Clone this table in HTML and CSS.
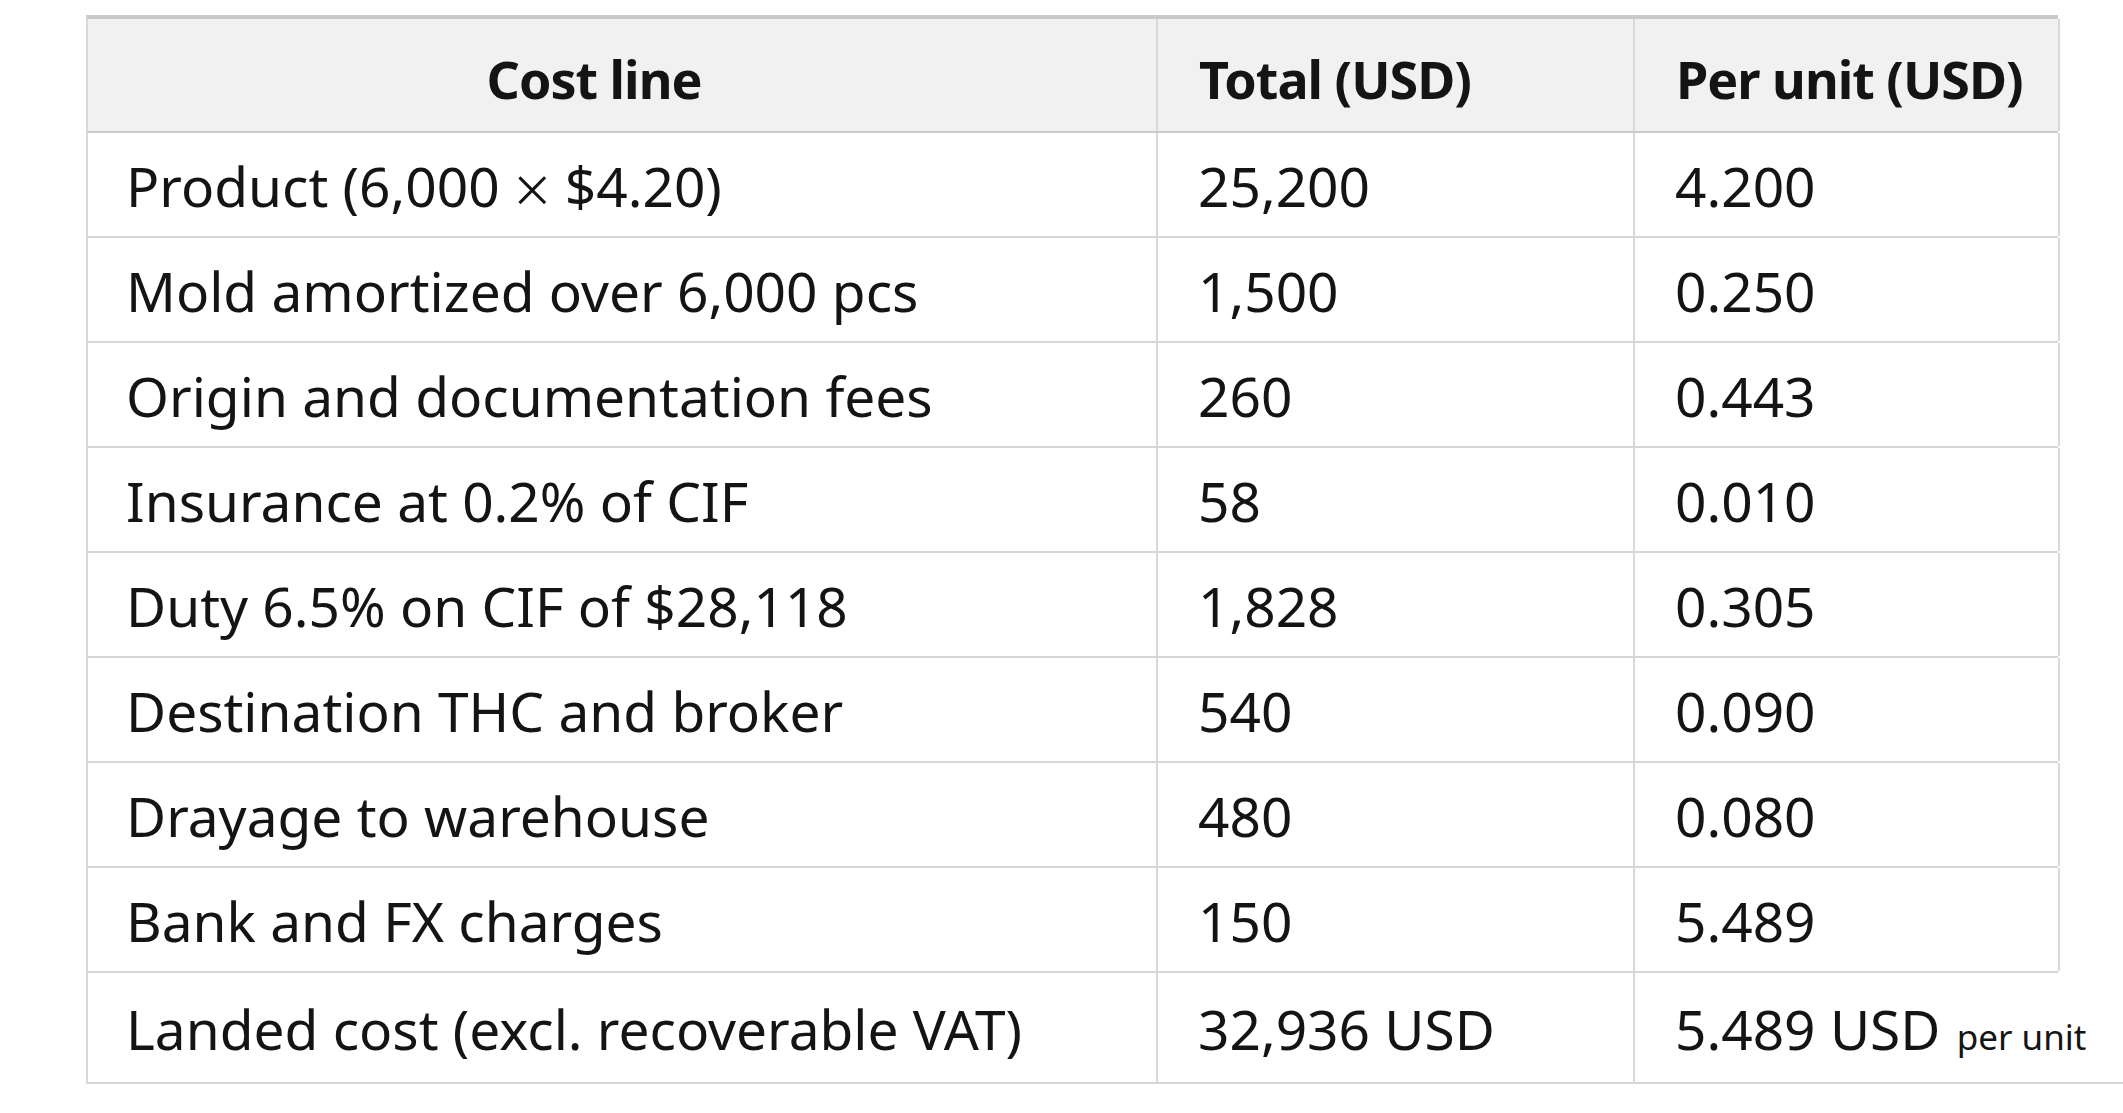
FILE: index.html
```html
<!DOCTYPE html>
<html lang="en">
<head>
<meta charset="utf-8">
<title>Landed cost</title>
<link rel="stylesheet" href="styles.css">
</head>
<body>
<div class="sheet">
  <div class="row head">
    <div class="cell c1 th-center">Cost line</div>
    <div class="cell c2">Total (USD)</div>
    <div class="cell c3">Per unit (USD)</div>
  </div>
  <div class="row">
    <div class="cell c1"><span>Product (6,000 <span class="times">×</span> $4.20)</span></div>
    <div class="cell c2">25,200</div>
    <div class="cell c3">4.200</div>
  </div>
  <div class="row">
    <div class="cell c1">Mold amortized over 6,000 pcs</div>
    <div class="cell c2">1,500</div>
    <div class="cell c3">0.250</div>
  </div>
  <div class="row">
    <div class="cell c1">Origin and documentation fees</div>
    <div class="cell c2">260</div>
    <div class="cell c3">0.443</div>
  </div>
  <div class="row">
    <div class="cell c1">Insurance at 0.2% of CIF</div>
    <div class="cell c2">58</div>
    <div class="cell c3">0.010</div>
  </div>
  <div class="row">
    <div class="cell c1">Duty 6.5% on CIF of $28,118</div>
    <div class="cell c2">1,828</div>
    <div class="cell c3">0.305</div>
  </div>
  <div class="row">
    <div class="cell c1">Destination THC and broker</div>
    <div class="cell c2">540</div>
    <div class="cell c3">0.090</div>
  </div>
  <div class="row">
    <div class="cell c1">Drayage to warehouse</div>
    <div class="cell c2">480</div>
    <div class="cell c3">0.080</div>
  </div>
  <div class="row">
    <div class="cell c1">Bank and FX charges</div>
    <div class="cell c2">150</div>
    <div class="cell c3">5.489</div>
  </div>
  <div class="row total">
    <div class="cell c1">Landed cost (excl. recoverable VAT)</div>
    <div class="cell c2">32,936 USD</div>
    <div class="cell c3"><span>5.489 USD <span class="unit">per unit</span></span></div>
  </div>
</div>
</body>
</html>
```

FILE: styles.css
```css
html, body {
  margin: 0;
  padding: 0;
  background: #ffffff;
}

body {
  padding: 15px 0 0 86px;
  font-family: "Noto Sans", "Open Sans", "DejaVu Sans", sans-serif;
  color: #141414;
  overflow: hidden;
}

.sheet {
  display: flex;
  flex-direction: column;
  width: 2037px;
}

.row {
  display: grid;
  grid-template-columns: 1070px 477px 425px;
  width: 1972px;
  height: 105px;
  box-sizing: border-box;
  border-left: 2px solid #d9d9d9;
  border-bottom: 2px solid #d6d6d6;
  font-size: 55px;
}

.row.head {
  height: 118px;
  background: #f1f1f1;
  border-top: 4px solid #c9c9c9;
  border-bottom: 2px solid #cbcbcb;
  font-weight: 700;
  font-size: 52px;
  letter-spacing: -1px;
}

.row.total {
  grid-template-columns: 1070px 477px 490px;
  width: 2037px;
  height: 111px;
}

.cell {
  display: flex;
  align-items: center;
  padding-left: 38px;
  border-right: 2px solid #d9d9d9;
  white-space: nowrap;
}

.c2,
.c3 {
  padding-left: 40px;
}

.row:not(.head) .cell {
  padding-top: 2px;
}

.head .cell {
  padding-top: 6px;
}

.head .c1 {
  justify-content: center;
  padding-left: 0;
  padding-right: 56px;
}

.head .c2,
.head .c3 {
  padding-left: 41px;
}

.row.total .c3 {
  border-right: none;
}

.times {
  font-size: 64px;
  font-weight: 300;
  line-height: 1;
  vertical-align: -6px;
}

.unit {
  font-size: 35px;
  margin-left: 2px;
}
```
